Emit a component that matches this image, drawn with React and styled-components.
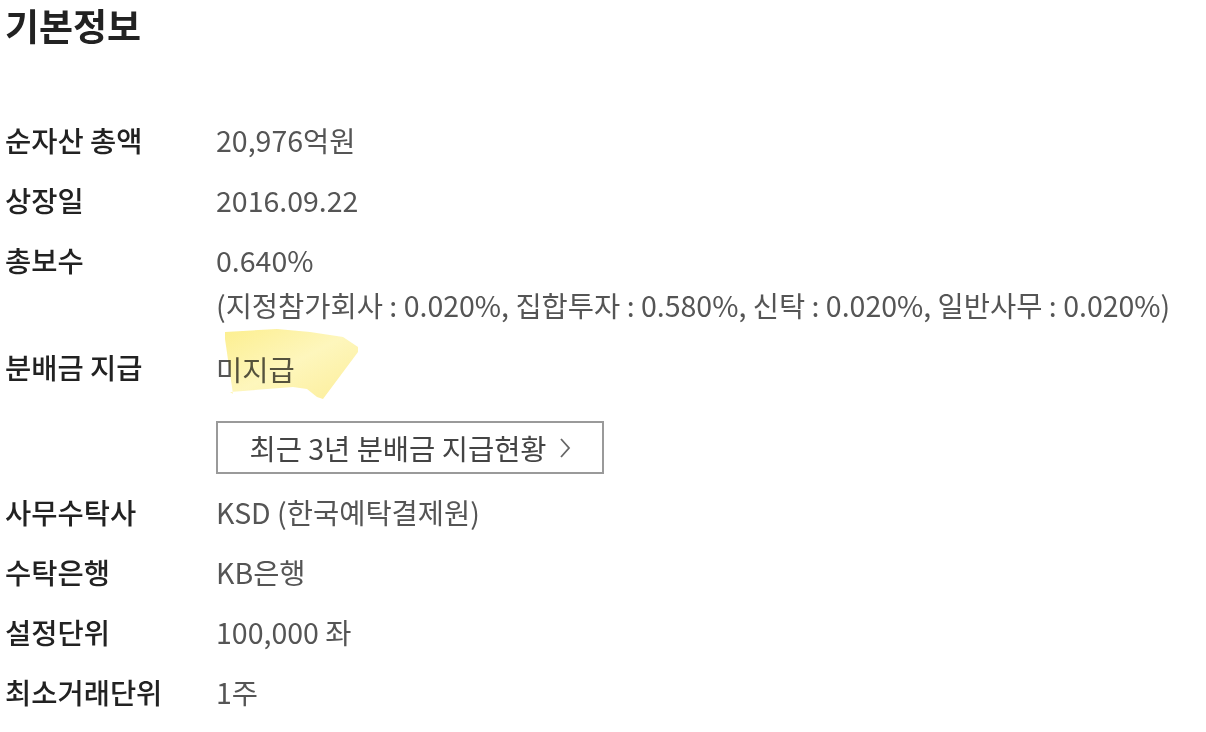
import React from "react";
import styled, { createGlobalStyle } from "styled-components";

const GlobalStyle = createGlobalStyle`
  body {
    margin: 0;
    background: #ffffff;
    font-family: "Noto Sans CJK KR", "Noto Sans", sans-serif;
  }
`;

const rows = [
  { label: "순자산 총액", value: "20,976억원" },
  { label: "상장일", value: "2016.09.22" },
  {
    label: "총보수",
    value: "0.640%",
    note: "(지정참가회사 : 0.020%, 집합투자 : 0.580%, 신탁 : 0.020%, 일반사무 : 0.020%)",
  },
  { label: "분배금 지급", value: "미지급", highlight: true, button: "최근 3년 분배금 지급현황" },
  { label: "사무수탁사", value: "KSD (한국예탁결제원)" },
  { label: "수탁은행", value: "KB은행" },
  { label: "설정단위", value: "100,000 좌" },
  { label: "최소거래단위", value: "1주" },
];

const Highlighter = () => (
  <Marker viewBox="0 0 140 74" width="140" height="74">
    <defs>
      <linearGradient id="hl" x1="0" y1="0" x2="1" y2="1">
        <stop offset="0" stopColor="#fbe96a" />
        <stop offset="0.5" stopColor="#fdf3a6" />
        <stop offset="1" stopColor="#fbe877" />
      </linearGradient>
    </defs>
    <polygon
      points="3,5 21,4 55,2 88,5 121,10 136,20 136,25 101,72 95,70 85,62 71,60 8,65 11,67 3,12"
      fill="url(#hl)"
      opacity="0.75"
    />
  </Marker>
);

const Chevron = () => (
  <svg width="12" height="22" viewBox="0 0 12 22">
    <polyline points="2,2 10,11 2,20" fill="none" stroke="#666" strokeWidth="1.8" />
  </svg>
);

const App = () => {
  return (
    <Page>
      <GlobalStyle />
      <Title>기본정보</Title>
      <InfoList>
        {rows.map((row) => (
          <Row key={row.label}>
            <Label>{row.label}</Label>
            <Value>
              {row.highlight ? (
                <Highlighted>
                  {row.value}
                  <Highlighter />
                </Highlighted>
              ) : (
                <div>{row.value}</div>
              )}
              {row.note && <Note>{row.note}</Note>}
              {row.button && (
                <HistoryButton type="button">
                  {row.button}
                  <Chevron />
                </HistoryButton>
              )}
            </Value>
          </Row>
        ))}
      </InfoList>
    </Page>
  );
};

const Page = styled.main`
  padding: 0 5px;
  width: 1196px;
`;

const Title = styled.h2`
  margin: 0;
  font-size: 37px;
  line-height: 50px;
  font-weight: 700;
  color: #222222;
`;

const InfoList = styled.dl`
  margin: 67px 0 0 0;
  display: flex;
  flex-direction: column;
  gap: 15px;
`;

const Row = styled.div`
  display: grid;
  grid-template-columns: 211px 1fr;
  font-size: 28.5px;
  line-height: 45px;
`;

const Label = styled.dt`
  font-weight: 500;
  color: #222222;
`;

const Value = styled.dd`
  margin: 0;
  color: #555555;
  display: flex;
  flex-direction: column;
  align-items: flex-start;
`;

const Note = styled.div`
  white-space: nowrap;
  margin-bottom: 2px;
`;

const Highlighted = styled.span`
  position: relative;
  display: inline-block;
  margin-top: 2px;
`;

const Marker = styled.svg`
  position: absolute;
  left: 6px;
  top: -19px;
  mix-blend-mode: multiply;
  pointer-events: none;
`;

const HistoryButton = styled.button`
  margin-top: 30px;
  width: 388px;
  height: 53px;
  border: 2px solid #9a9a9a;
  background: #ffffff;
  font-family: inherit;
  font-size: 28.5px;
  color: #444444;
  display: flex;
  align-items: center;
  justify-content: center;
  gap: 12px;
  padding: 0;
  cursor: pointer;
`;

export default App;
